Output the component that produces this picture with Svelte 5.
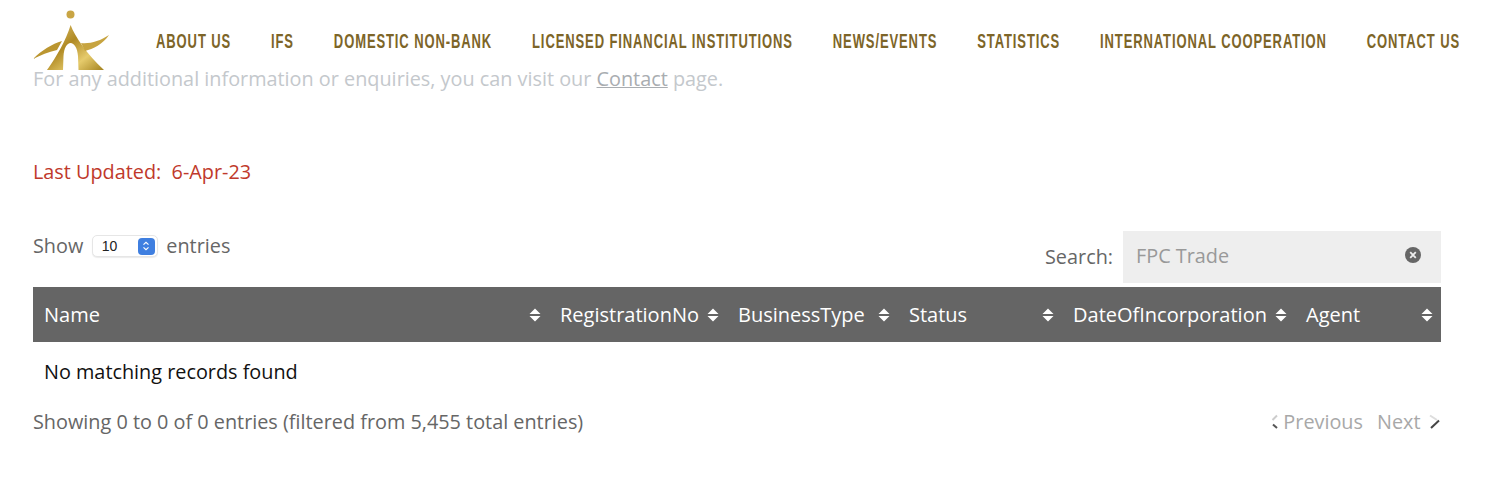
<script lang="ts">
    const navItems = [
        'ABOUT US',
        'IFS',
        'DOMESTIC NON-BANK',
        'LICENSED FINANCIAL INSTITUTIONS',
        'NEWS/EVENTS',
        'STATISTICS',
        'INTERNATIONAL COOPERATION',
        'CONTACT US'
    ];

    const columns = [
        { label: 'Name', width: 516 },
        { label: 'RegistrationNo', width: 178 },
        { label: 'BusinessType', width: 171 },
        { label: 'Status', width: 164 },
        { label: 'DateOfIncorporation', width: 233 },
        { label: 'Agent', width: 146 }
    ];
</script>

<div class="page">
    <header class="topbar">
        <svg class="logo" viewBox="0 0 78 62" width="78" height="62" aria-label="logo">
            <defs>
                <linearGradient id="gold" x1="0" y1="0" x2="1" y2="1">
                    <stop offset="0" stop-color="#e2c670" />
                    <stop offset="0.4" stop-color="#b08a24" />
                    <stop offset="0.7" stop-color="#e6cb6c" />
                    <stop offset="1" stop-color="#a3821f" />
                </linearGradient>
            </defs>
            <circle cx="37.5" cy="4.5" r="4" fill="#c9a544" />
            <path d="M37.6 15 C42 27 54 44 71 60 L45.5 60 L45 46 C44.5 38 41 33 37.6 33 C34 33 31 38 30.5 46 L30 60 L14 60 C24 46 33 30 37.6 15 Z" fill="url(#gold)" />
            <path d="M0 49 C9 40 19 34 29 31 L24 40 C15 42 8 45 0 49 Z" fill="#bb9630" />
            <path d="M48 33 C57 34 67 31 76 25 C70 34 60 39 52 41 Z" fill="#c7a440" />
        </svg>
        <nav class="nav">
            {#each navItems as item}
                <a href="#top">{item}</a>
            {/each}
        </nav>
    </header>

    <main class="content">
        <p class="intro">For any additional information or enquiries, you can visit our <a href="#top">Contact</a> page.</p>
        <p class="updated">Last Updated:&nbsp; 6-Apr-23</p>

        <div class="controls">
            <div class="length">
                <span>Show</span>
                <span class="select">
                    <span class="select-value">10</span>
                    <span class="select-btn">
                        <svg viewBox="0 0 10 12" width="10" height="12">
                            <path d="M2.5 4.6 5 2.4 7.5 4.6M2.5 7.4 5 9.6 7.5 7.4" fill="none" stroke="#fff" stroke-width="1.2" />
                        </svg>
                    </span>
                </span>
                <span>entries</span>
            </div>
            <div class="search">
                <span class="search-label">Search:</span>
                <div class="search-box">
                    <span>FPC Trade</span>
                    <svg viewBox="0 0 16 16" width="16" height="16">
                        <circle cx="8" cy="8" r="8" fill="#666" />
                        <path d="M5.2 5.2 10.8 10.8M10.8 5.2 5.2 10.8" stroke="#eee" stroke-width="1.8" />
                    </svg>
                </div>
            </div>
        </div>

        <table>
            <colgroup>
                {#each columns as col}
                    <col style="width: {col.width}px" />
                {/each}
            </colgroup>
            <thead>
                <tr>
                    {#each columns as col}
                        <th>
                            <div class="th-inner">
                                <span>{col.label}</span>
                                <svg viewBox="0 0 12 14" width="12" height="14">
                                    <path d="M6 0.5 11.5 6H0.5ZM6 13.5 0.5 8H11.5Z" fill="#fff" />
                                </svg>
                            </div>
                        </th>
                    {/each}
                </tr>
            </thead>
            <tbody>
                <tr>
                    <td colspan="6">No matching records found</td>
                </tr>
            </tbody>
        </table>

        <div class="footer">
            <span>Showing 0 to 0 of 0 entries (filtered from 5,455 total entries)</span>
            <div class="pager">
                <svg viewBox="0 0 10 16" width="10" height="16">
                    <path d="M7 1.5 2.5 6" stroke="#ccc" stroke-width="2" fill="none" />
                    <path d="M3 10.5 7 14" stroke="#555" stroke-width="2" fill="none" />
                </svg>
                <span>Previous</span>
                <span class="next">Next</span>
                <svg viewBox="0 0 13 16" width="13" height="16">
                    <path d="M2 1.5 9 6" stroke="#ddd" stroke-width="2" fill="none" />
                    <path d="M11 6.5 3 14" stroke="#444" stroke-width="2" fill="none" />
                </svg>
            </div>
        </div>
    </main>
</div>

<style>
    :global(body) { margin: 0; background: #fff; }

    .page {
        position: relative;
        width: 1500px;
        height: 497px;
        overflow: hidden;
        font-family: "Open Sans", "Liberation Sans", sans-serif;
        font-size: 19.83px;
        color: #666;
    }

    .topbar {
        position: absolute;
        top: 10px;
        left: 33px;
        right: 40px;
        display: flex;
        align-items: flex-start;
    }
    .logo { display: block; flex-shrink: 0; }
    .nav {
        flex: 1 1 0;
        min-width: 0;
        display: flex;
        justify-content: flex-end;
        gap: 64.5px;
        margin-top: 18px;
        transform: scaleX(0.619);
        transform-origin: right center;
    }
    .nav a {
        flex-shrink: 0;
        font-family: "Liberation Sans", sans-serif;
        font-size: 21px;
        font-weight: 700;
        letter-spacing: 1.45px;
        line-height: 26px;
        color: #7d6528;
        text-decoration: none;
        white-space: nowrap;
    }

    .content { padding: 66px 59px 0 33px; }

    .intro {
        margin: 0;
        line-height: 26px;
        color: #c4c8cc;
    }
    .intro a { color: #a9adb1; }

    .updated {
        margin: 67px 0 0;
        line-height: 26px;
        color: #c0392b;
    }

    .controls {
        display: flex;
        justify-content: space-between;
        align-items: flex-start;
        margin-top: 46px;
        height: 56px;
    }
    .length {
        display: flex;
        align-items: center;
        gap: 8.5px;
        margin-top: 2px;
        line-height: 26px;
    }
    .select {
        display: flex;
        align-items: center;
        justify-content: space-between;
        width: 66px;
        height: 22px;
        box-sizing: border-box;
        padding: 0 2px 0 9px;
        background: #fff;
        border: 1px solid #e6e6e6;
        border-radius: 5px;
        box-shadow: 0 1px 1px rgba(0, 0, 0, 0.08);
    }
    .select-value {
        font-family: "Liberation Sans", sans-serif;
        font-size: 14px;
        color: #222;
    }
    .select-btn {
        display: flex;
        align-items: center;
        justify-content: center;
        width: 17px;
        height: 17px;
        background: #3f7fe0;
        border-radius: 4px;
    }

    .search {
        display: flex;
        align-items: center;
        gap: 10px;
    }
    .search-label { margin-bottom: 2px; }
    .search-box {
        display: flex;
        align-items: center;
        justify-content: space-between;
        box-sizing: border-box;
        width: 318px;
        height: 52px;
        padding: 0 20px 4px 13px;
        background: #eee;
        color: #999;
    }

    table {
        width: 1408px;
        table-layout: fixed;
        border-collapse: collapse;
    }
    th {
        height: 55px;
        padding: 0 8px 0 11px;
        background: #656565;
        color: #fff;
        font-size: 20px;
        font-weight: 400;
        text-align: left;
    }
    .th-inner {
        display: flex;
        align-items: center;
        justify-content: space-between;
    }
    td {
        padding: 17px 11px 0;
        line-height: 26px;
        color: #111;
    }

    .footer {
        display: flex;
        justify-content: space-between;
        align-items: center;
        margin-top: 24px;
        line-height: 26px;
    }
    .pager {
        display: flex;
        align-items: center;
        gap: 3px;
        color: #a8a8a8;
    }
    .next { margin: 0 4.5px 0 11px; }
</style>
